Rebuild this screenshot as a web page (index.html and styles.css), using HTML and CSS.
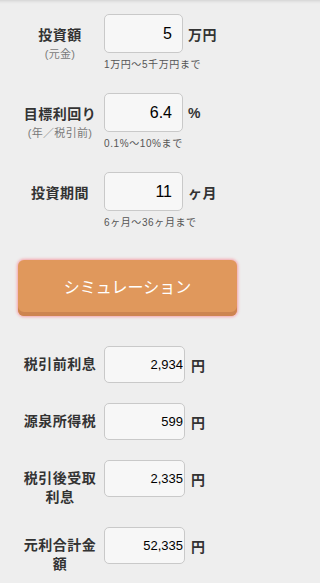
FILE: index.html
```html
<!DOCTYPE html>
<html lang="ja">
<head>
<meta charset="utf-8">
<title>シミュレーション</title>
<link rel="stylesheet" href="styles.css">
</head>
<body>
<div class="page">
  <div class="form">
    <div class="row">
      <div class="label">
        <div class="main">投資額</div>
        <div class="sub">(元金)</div>
      </div>
      <div class="field">
        <div class="line"><input class="in" type="text" value="5"><span class="unit">万円</span></div>
        <div class="hint">1万円～5千万円まで</div>
      </div>
    </div>
    <div class="row">
      <div class="label">
        <div class="main">目標利回り</div>
        <div class="sub">(年／税引前)</div>
      </div>
      <div class="field">
        <div class="line"><input class="in" type="text" value="6.4"><span class="unit">%</span></div>
        <div class="hint">0.1%～10%まで</div>
      </div>
    </div>
    <div class="row">
      <div class="label">
        <div class="main">投資期間</div>
      </div>
      <div class="field">
        <div class="line"><input class="in" type="text" value="11"><span class="unit">ヶ月</span></div>
        <div class="hint">6ヶ月～36ヶ月まで</div>
      </div>
    </div>
  </div>

  <button class="sim" type="button">シミュレーション</button>

  <div class="results">
    <div class="rrow">
      <div class="rlabel">税引前利息</div>
      <div class="line"><input class="out" type="text" value="2,934" readonly><span class="unit">円</span></div>
    </div>
    <div class="rrow">
      <div class="rlabel">源泉所得税</div>
      <div class="line"><input class="out" type="text" value="599" readonly><span class="unit">円</span></div>
    </div>
    <div class="rrow">
      <div class="rlabel">税引後受取<br>利息</div>
      <div class="line"><input class="out" type="text" value="2,335" readonly><span class="unit">円</span></div>
    </div>
    <div class="rrow">
      <div class="rlabel">元利合計金<br>額</div>
      <div class="line"><input class="out" type="text" value="52,335" readonly><span class="unit">円</span></div>
    </div>
  </div>
</div>
</body>
</html>
```

FILE: styles.css
```css
html, body {
  margin: 0;
  padding: 0;
}
body {
  background: linear-gradient(to bottom, #d6d6d6 0, #e6e6e6 2px, #eeeeee 4px) no-repeat #eeeeee;
  font-family: "Liberation Sans", "Noto Sans CJK JP", sans-serif;
  color: #333333;
}
.page {
  box-sizing: border-box;
  width: 255px;
  padding: 14px 18px 0 18px;
}
.row {
  display: flex;
  align-items: flex-start;
  margin-bottom: 21px;
}
.row:last-child {
  margin-bottom: 0;
}
.label {
  width: 84px;
  margin-right: 2px;
  padding-top: 11px;
  text-align: center;
}
.main {
  font-size: 14px;
  line-height: 20px;
  font-weight: bold;
  letter-spacing: 0.5px;
}
.sub {
  margin-top: 2px;
  font-size: 11px;
  line-height: 14px;
  color: #7a7a7a;
  letter-spacing: 0.3px;
}
.field {
  display: flex;
  flex-direction: column;
}
.line {
  display: flex;
  align-items: center;
}
.in, .out {
  box-sizing: border-box;
  margin: 0;
  border: 1px solid #c9c9c9;
  border-radius: 5px;
  background: #f7f7f7;
  color: #000000;
  text-align: right;
  font-family: "Liberation Sans", "Noto Sans CJK JP", sans-serif;
  outline: none;
}
.in {
  width: 79px;
  height: 39px;
  padding: 0 10px 0 4px;
  font-size: 16px;
}
.out {
  width: 81px;
  height: 37px;
  padding: 0 1px 0 4px;
  font-size: 13px;
}
.unit {
  margin-left: 5px;
  font-size: 14px;
  font-weight: bold;
  color: #333333;
  letter-spacing: 0.5px;
}
.out + .unit {
  margin-left: 6px;
}
.hint {
  margin-top: 5px;
  font-size: 10px;
  line-height: 14px;
  color: #555555;
  letter-spacing: 0.6px;
  white-space: nowrap;
}
.sim {
  display: block;
  box-sizing: border-box;
  width: 100%;
  height: 56px;
  margin: 30px 0 0 0;
  padding: 0 0 4px 0;
  border: none;
  border-radius: 6px;
  background: #e0985c;
  box-shadow: inset 0 -4px 0 #cd8450, 0 0 3px 1px #f5a3ab;
  color: #ffffff;
  font-family: "Liberation Sans", "Noto Sans CJK JP", sans-serif;
  font-size: 16px;
  letter-spacing: 0;
  cursor: pointer;
}
.results {
  margin-top: 30px;
}
.rrow {
  display: flex;
  align-items: flex-start;
  margin-bottom: 20px;
}
.rlabel {
  width: 84px;
  margin-right: 2px;
  padding-top: 9px;
  text-align: center;
  font-size: 14px;
  line-height: 19px;
  font-weight: bold;
  letter-spacing: 0.5px;
}
```
